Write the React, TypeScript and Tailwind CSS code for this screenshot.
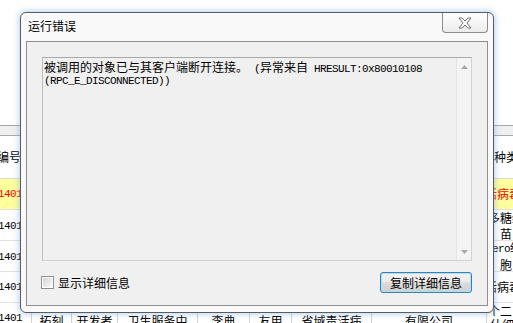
import type { ReactNode } from 'react';

const cjk = "font-['Noto_Sans_CJK_SC',sans-serif]";
const mono = "font-['Liberation_Mono','Noto_Sans_CJK_SC',monospace]";
const cols = 'grid grid-cols-[32px_40px_46px_80px_52px_42px_80px_115px_40px]';

type Row = { left: ReactNode; right: ReactNode; mid?: string[][]; hot?: boolean };

const rows: Row[] = [
  { hot: true, left: '1401', right: <span className="-ml-[2px]">活病毒</span> },
  {
    left: '1401',
    right: (
      <div className="flex flex-col leading-[16px]">
        <span className="pl-[1px]">多糖结</span>
        <span className="pl-[13px]">苗</span>
      </div>
    ),
  },
  {
    left: '1401',
    right: (
      <div className="flex flex-col leading-[16px]">
        <span className={`${mono} -ml-[1px] text-[11px] tracking-[-0.6px]`}>Vero细</span>
        <span className="pl-[13px]">胞</span>
      </div>
    ),
  },
  { left: '1401', right: <span className="-ml-[2px]">活病毒</span> },
  {
    left: '1401',
    mid: [
      ['研发', '拓刻'],
      ['生产', '开发者'],
      ['社区', '卫生服务中'],
      ['张三', '李典'],
      ['使用', '友用'],
      ['区域', '省域责活病'],
      ['某某生物制品', '有限公司'],
    ],
    right: (
      <div className="flex flex-col leading-[14px]">
        <span className="pl-[1px]">个二</span>
        <span className="pl-[3px]">什细</span>
      </div>
    ),
  },
];

function Table() {
  return (
    <div className={`${cjk} text-[12px] text-black`}>
      <div className="h-[125px]" />
      <div className="h-[11px] border-y border-[#a8a8a8] bg-[#f0f0f0]" />
      <div className={`${cols} h-[43px] border-b border-[#dcdcdc]`}>
        <div className="flex items-center border-r border-[#d4d4d4]">
          <span className="-ml-[3px] whitespace-nowrap">编号</span>
        </div>
        {Array.from({ length: 7 }).map((_, i) => (
          <div key={i} className="border-r border-[#d4d4d4]" />
        ))}
        <div className="flex items-center pl-[7px] whitespace-nowrap">种类别</div>
      </div>
      {rows.map((r, ri) => (
        <div
          key={ri}
          className={`${cols} h-[31px] border-b border-[#e2e2e2] ${r.hot ? 'bg-[#ffff9c] text-[#ff0000]' : ''}`}
        >
          <div className="flex items-center border-r border-[#d4d4d4] overflow-hidden">
            <span className={`${mono} -ml-[2px] text-[11px] tracking-[-0.6px]`}>{r.left}</span>
          </div>
          {Array.from({ length: 7 }).map((_, i) => (
            <div
              key={i}
              className="flex flex-col items-center justify-start border-r border-[#d4d4d4] leading-[16px] whitespace-nowrap overflow-hidden"
            >
              {r.mid && (
                <div className="-mt-[6px] flex flex-col items-center">
                  {r.mid[i].map((t, k) => (
                    <span key={k}>{t}</span>
                  ))}
                </div>
              )}
            </div>
          ))}
          <div className="flex items-center whitespace-nowrap">{r.right}</div>
        </div>
      ))}
    </div>
  );
}

function Arrow({ up }: { up?: boolean }) {
  return (
    <svg width="7" height="4" viewBox="0 0 7 4">
      <polygon points={up ? '3.5,0 7,4 0,4' : '0,0 7,0 3.5,4'} fill="#a7a7a7" />
    </svg>
  );
}

function Dialog() {
  return (
    <div className="absolute left-[20px] top-[12px] flex h-[301px] w-[474px] flex-col rounded-[6px] border border-[#5c5c5c] bg-[#f9f9f9] shadow-[0_0_6px_1px_rgba(120,170,225,0.55)]">
      {/* title bar */}
      <div className="flex h-[28px] items-start justify-between">
        <span className={`${cjk} pl-[7px] pt-[5px] text-[12px] leading-[16px] text-black`}>运行错误</span>
        <div className="mr-[5px] flex h-[20px] w-[46px] items-center justify-center rounded-b-[4px] border-x border-b border-[#8c8c8c] bg-[linear-gradient(#ffffff,#ececec)]">
          <svg width="14" height="12" viewBox="0 0 14 12">
            <polygon
              points="1,1 4.2,1 7,4 9.8,1 13,1 9,6 13,11 9.8,11 7,8 4.2,11 1,11 5,6"
              fill="#ffffff"
              stroke="#707070"
              strokeWidth="1"
              strokeLinejoin="round"
            />
          </svg>
        </div>
      </div>

      {/* client */}
      <div className="mx-[5px] flex h-[265px] flex-col border border-[#8f8f8f] bg-[#f0f0f0] px-[15px] pt-[15px]">
        <div className="flex h-[204px] border border-[#d2d2d2] border-t-[#a9a9a9] border-l-[#bdbdbd] bg-[#f0f0f0]">
          <div className={`${cjk} flex-1 pl-[1px] pt-[3px] text-[12px] leading-[12px] text-black`}>
            <div className="whitespace-nowrap">
              被调用的对象已与其客户端断开连接。
              <span className={`${mono} text-[11px] tracking-[-0.6px] whitespace-pre`}> (</span>
              异常来自
              <span className={`${mono} text-[11px] tracking-[-0.6px] whitespace-pre`}> HRESULT:0x80010108</span>
            </div>
            <div className={`${mono} text-[11px] tracking-[-0.6px] whitespace-pre`}>(RPC_E_DISCONNECTED))</div>
          </div>
          <div className="flex w-[15px] flex-col justify-between border-l border-[#e4e4e4] bg-[#f4f4f4]">
            <div className="flex h-[17px] items-center justify-center">
              <Arrow up />
            </div>
            <div className="flex h-[17px] items-center justify-center">
              <Arrow />
            </div>
          </div>
        </div>

        <div className="mt-[11px] flex h-[21px] items-center justify-between">
          <div className="flex items-center gap-[4px] -ml-[1px]">
            <div className="flex h-[13px] w-[13px] items-center justify-center border border-[#8e8f8f] bg-white">
              <div className="h-[9px] w-[9px] bg-[linear-gradient(135deg,#d8d8d8,#f7f7f7)]" />
            </div>
            <span className={`${cjk} text-[12px] leading-[16px] text-black`}>显示详细信息</span>
          </div>
          <button className="flex h-[21px] w-[92px] items-center justify-center rounded-[3px] border border-[#3c7fb1] bg-[linear-gradient(#f2f2f2_0%,#ebebeb_50%,#dddddd_50%,#cfcfcf_100%)] shadow-[inset_0_0_0_1px_#a8e2f8]">
            <span className={`${cjk} text-[12px] leading-[16px] text-black`}>复制详细信息</span>
          </button>
        </div>
      </div>
    </div>
  );
}

export default function App() {
  return (
    <div className="relative h-[323px] w-[513px] overflow-hidden bg-white">
      <Table />
      <Dialog />
    </div>
  );
}
